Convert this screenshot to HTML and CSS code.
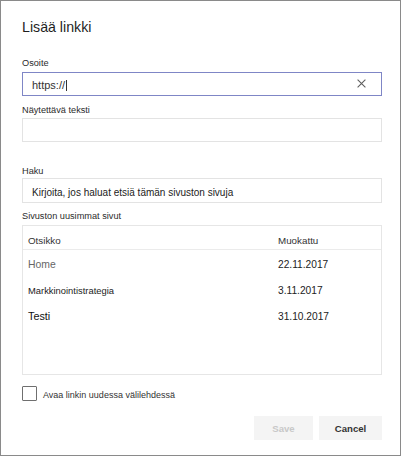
FILE: index.html
```html
<!DOCTYPE html>
<html lang="fi">
<head>
<meta charset="utf-8">
<title>Lisää linkki</title>
<link rel="stylesheet" href="styles.css">
</head>
<body>
<div class="dialog">
  <h1 class="title">Lisää linkki</h1>

  <label class="label l-addr">Osoite</label>
  <div class="input active">
    <span class="value">https://</span><span class="caret"></span>
    <svg class="clear" width="9" height="9" viewBox="0 0 9 9" aria-hidden="true">
      <path d="M0.6 0.6 L8.4 8.4 M8.4 0.6 L0.6 8.4" stroke="#5f5f5f" stroke-width="1.1" fill="none"/>
    </svg>
  </div>

  <label class="label l-text">Näytettävä teksti</label>
  <div class="input"></div>

  <label class="label l-search">Haku</label>
  <div class="input search"><span class="placeholder">Kirjoita, jos haluat etsiä tämän sivuston sivuja</span></div>

  <label class="label l-recent">Sivuston uusimmat sivut</label>
  <div class="table">
    <div class="thead">
      <span>Otsikko</span>
      <span>Muokattu</span>
    </div>
    <div class="tbody">
      <div class="row"><span class="name home">Home</span><span class="date">22.11.2017</span></div>
      <div class="row"><span class="name small">Markkinointistrategia</span><span class="date">3.11.2017</span></div>
      <div class="row"><span class="name big">Testi</span><span class="date">31.10.2017</span></div>
    </div>
  </div>

  <div class="check">
    <span class="box"></span>
    <span class="check-label">Avaa linkin uudessa välilehdessä</span>
  </div>

  <div class="actions">
    <button class="btn save" disabled>Save</button>
    <button class="btn cancel">Cancel</button>
  </div>
</div>
</body>
</html>
```
FILE: styles.css
```css
html, body {
  margin: 0;
  padding: 0;
  background: #ffffff;
}

body {
  font-family: "Liberation Sans", Arial, sans-serif;
  color: #222222;
}

.dialog {
  box-sizing: border-box;
  width: 401px;
  height: 456px;
  border: 1px solid #8a8a8a;
  padding: 18px 18px 0 21px;
  background: #ffffff;
}

.title {
  margin: 0;
  font-size: 14.2px;
  line-height: 17px;
  font-weight: normal;
  color: #1f1f1f;
}

.label {
  display: block;
  font-size: 9.2px;
  line-height: 12px;
  color: #2b2b2b;
}

.l-addr { margin: 21px 0 3px; }
.l-text { margin: 8px 0 2px; }
.l-search { margin: 23px 0 1px; }
.l-recent { margin: 7px 0 3px; }

.input {
  box-sizing: border-box;
  height: 24px;
  border: 1px solid #e3e3e3;
  display: flex;
  align-items: center;
  padding: 2px 16px 0 9px;
}

.input.active {
  border-color: #7f86c6;
}

.value {
  font-size: 11px;
  color: #333333;
}

.caret {
  width: 1px;
  height: 11px;
  background: #333333;
  margin-left: 1px;
}

.clear {
  margin-left: auto;
  margin-right: -1px;
  margin-bottom: 3px;
}

.input.search {
  height: 25px;
  padding-top: 4px;
}

.placeholder {
  font-size: 10px;
  color: #222222;
}

.table {
  box-sizing: border-box;
  height: 150px;
  border: 1px solid #e6e6e6;
}

.thead {
  display: grid;
  grid-template-columns: 250px 1fr;
  height: 24px;
  box-sizing: border-box;
  padding: 8px 0 0 5px;
  line-height: 14px;
  font-size: 9.8px;
  color: #333333;
  border-bottom: 1px solid #ebebeb;
}

.tbody {
  padding-top: 1px;
}

.row {
  display: grid;
  grid-template-columns: 250px 1fr;
  align-items: center;
  height: 26px;
  padding-left: 5px;
}

.name {
  font-size: 9.4px;
  color: #222222;
}

.name.home {
  font-size: 10.4px;
  color: #666666;
}

.name.big {
  font-size: 10.8px;
  color: #111111;
}

.date {
  font-size: 10.2px;
  color: #222222;
}

.check {
  display: flex;
  align-items: center;
  margin-top: 11px;
  height: 15px;
}

.box {
  box-sizing: border-box;
  width: 15px;
  height: 15px;
  border: 1px solid #6f6f6f;
  border-radius: 1px;
  flex: none;
}

.check-label {
  margin-left: 6px;
  padding-top: 3px;
  font-size: 9px;
  color: #333333;
}

.actions {
  display: flex;
  justify-content: flex-end;
  gap: 6px;
  margin-top: 15px;
}

.btn {
  height: 24px;
  border: none;
  border-radius: 0;
  background: #f4f4f4;
  font-family: "Liberation Sans", Arial, sans-serif;
  font-size: 9.6px;
  font-weight: bold;
  color: #333333;
  padding: 0;
}

.btn.save {
  width: 59px;
  color: #c8c8c8;
}

.btn.cancel {
  width: 63px;
}
```
